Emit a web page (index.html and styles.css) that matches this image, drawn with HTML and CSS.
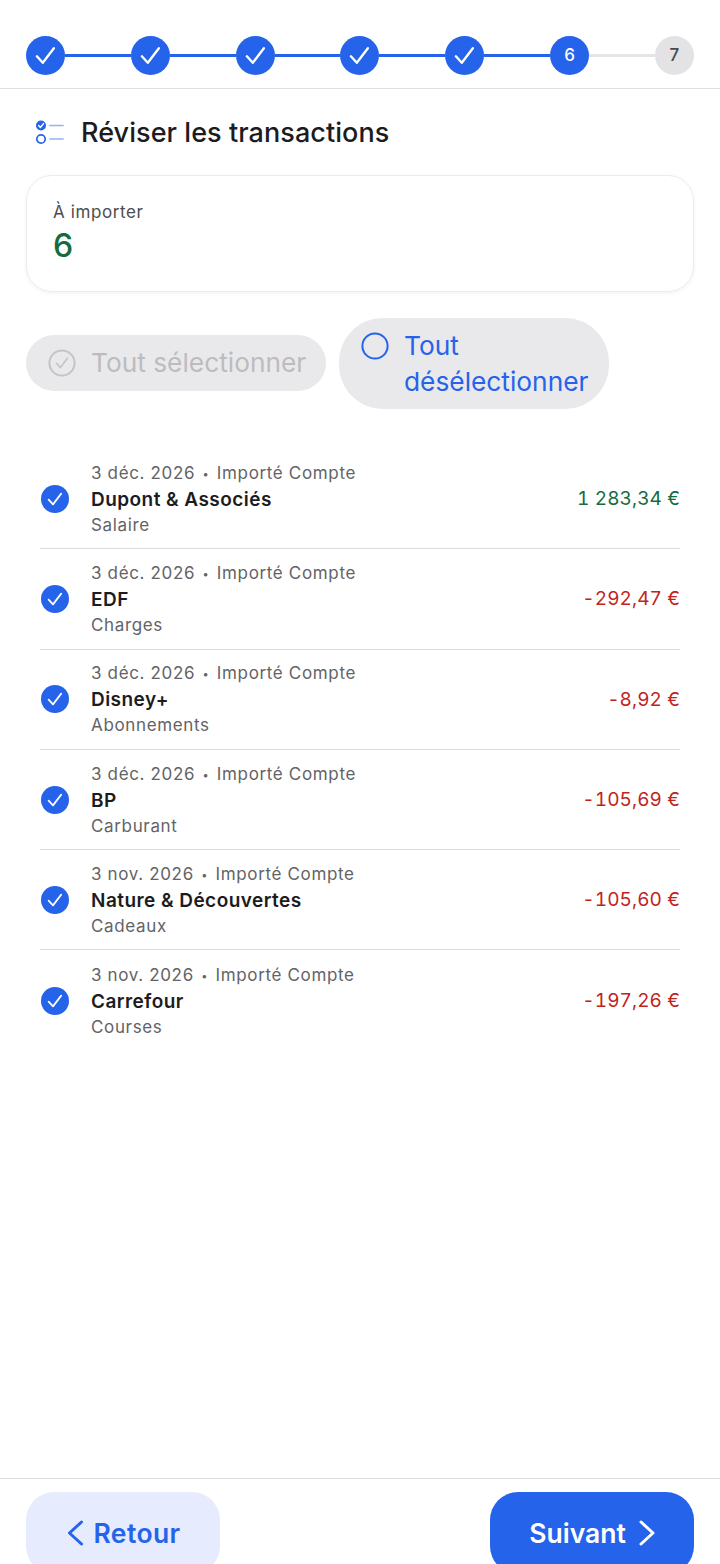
FILE: index.html
```html
<!DOCTYPE html>
<html lang="fr">
<head>
  <meta charset="UTF-8">
  <meta name="viewport" content="width=device-width, initial-scale=1.0">
  <title>Réviser les transactions</title>
  <link rel="stylesheet" href="styles.css">
</head>
<body>
  <svg class="icon-defs" width="0" height="0">
    <defs>
      <symbol id="check" viewBox="0 0 20 20">
        <path d="M3.6 10.6 L8 15.4 L16.2 4.6" fill="none" stroke="#fff" stroke-width="1.75" stroke-linecap="round" stroke-linejoin="round"/>
      </symbol>
    </defs>
  </svg>

  <div class="page">
    <div class="stepper">
      <div class="step step-done"><svg class="step-check"><use href="#check"/></svg></div>
      <div class="step-line step-line-done"></div>
      <div class="step step-done"><svg class="step-check"><use href="#check"/></svg></div>
      <div class="step-line step-line-done"></div>
      <div class="step step-done"><svg class="step-check"><use href="#check"/></svg></div>
      <div class="step-line step-line-done"></div>
      <div class="step step-done"><svg class="step-check"><use href="#check"/></svg></div>
      <div class="step-line step-line-done"></div>
      <div class="step step-done"><svg class="step-check"><use href="#check"/></svg></div>
      <div class="step-line step-line-done"></div>
      <div class="step step-done">6</div>
      <div class="step-line"></div>
      <div class="step step-todo">7</div>
    </div>

    <div class="title-row">
      <svg class="title-icon" width="30" height="26" viewBox="0 0 30 26">
        <circle cx="6" cy="6.5" r="5" fill="#2563eb"/>
        <path d="M3.6 6.6 L5.4 8.5 L8.5 4.6" fill="none" stroke="#fff" stroke-width="1.4" stroke-linecap="round" stroke-linejoin="round"/>
        <circle cx="6" cy="20" r="4.2" fill="none" stroke="#2563eb" stroke-width="1.7"/>
        <path d="M15 6.5 H28 M15 20 H28" stroke="#93b2f6" stroke-width="1.7" stroke-linecap="round"/>
      </svg>
      <h1 class="title">Réviser les transactions</h1>
    </div>

    <div class="summary-card">
      <p class="summary-label">À importer</p>
      <p class="summary-value">6</p>
    </div>

    <div class="select-row">
      <button class="select-btn select-btn-off">
        <svg class="select-icon" width="28" height="28" viewBox="0 0 28 28">
          <circle cx="14" cy="14" r="12.6" fill="none" stroke="#c4c4c6" stroke-width="2"/>
          <path d="M8.6 14.4 L12.4 18.6 L19.4 9.2" fill="none" stroke="#c4c4c6" stroke-width="1.6" stroke-linecap="round" stroke-linejoin="round"/>
        </svg>
        <span>Tout sélectionner</span>
      </button>
      <button class="select-btn select-btn-on">
        <svg class="select-icon" width="28" height="28" viewBox="0 0 28 28">
          <circle cx="14" cy="14" r="12.6" fill="none" stroke="#2563eb" stroke-width="2"/>
        </svg>
        <span>Tout désélectionner</span>
      </button>
    </div>

    <ul class="tx-list">
      <li class="tx-row">
        <span class="tx-check"><svg class="tx-check-icon"><use href="#check"/></svg></span>
        <div class="tx-info">
          <p class="tx-meta">3 déc. 2026 <span class="tx-dot">•</span> Importé Compte</p>
          <p class="tx-name">Dupont &amp; Associés</p>
          <p class="tx-cat">Salaire</p>
        </div>
        <span class="tx-amount tx-in">1&nbsp;283,34 €</span>
      </li>
      <li class="tx-row">
        <span class="tx-check"><svg class="tx-check-icon"><use href="#check"/></svg></span>
        <div class="tx-info">
          <p class="tx-meta">3 déc. 2026 <span class="tx-dot">•</span> Importé Compte</p>
          <p class="tx-name">EDF</p>
          <p class="tx-cat">Charges</p>
        </div>
        <span class="tx-amount tx-out">-292,47 €</span>
      </li>
      <li class="tx-row">
        <span class="tx-check"><svg class="tx-check-icon"><use href="#check"/></svg></span>
        <div class="tx-info">
          <p class="tx-meta">3 déc. 2026 <span class="tx-dot">•</span> Importé Compte</p>
          <p class="tx-name">Disney+</p>
          <p class="tx-cat">Abonnements</p>
        </div>
        <span class="tx-amount tx-out">-8,92 €</span>
      </li>
      <li class="tx-row">
        <span class="tx-check"><svg class="tx-check-icon"><use href="#check"/></svg></span>
        <div class="tx-info">
          <p class="tx-meta">3 déc. 2026 <span class="tx-dot">•</span> Importé Compte</p>
          <p class="tx-name">BP</p>
          <p class="tx-cat">Carburant</p>
        </div>
        <span class="tx-amount tx-out">-105,69 €</span>
      </li>
      <li class="tx-row">
        <span class="tx-check"><svg class="tx-check-icon"><use href="#check"/></svg></span>
        <div class="tx-info">
          <p class="tx-meta">3 nov. 2026 <span class="tx-dot">•</span> Importé Compte</p>
          <p class="tx-name">Nature &amp; Découvertes</p>
          <p class="tx-cat">Cadeaux</p>
        </div>
        <span class="tx-amount tx-out">-105,60 €</span>
      </li>
      <li class="tx-row">
        <span class="tx-check"><svg class="tx-check-icon"><use href="#check"/></svg></span>
        <div class="tx-info">
          <p class="tx-meta">3 nov. 2026 <span class="tx-dot">•</span> Importé Compte</p>
          <p class="tx-name">Carrefour</p>
          <p class="tx-cat">Courses</p>
        </div>
        <span class="tx-amount tx-out">-197,26 €</span>
      </li>
    </ul>

    <div class="footer">
      <button class="nav-btn nav-btn-back">
        <svg width="17" height="26" viewBox="0 0 17 26"><path d="M15.5 2 L3.5 13 L15.5 24" fill="none" stroke="#2563eb" stroke-width="3" stroke-linecap="round" stroke-linejoin="round"/></svg>
        <span>Retour</span>
      </button>
      <button class="nav-btn nav-btn-next">
        <span>Suivant</span>
        <svg width="16" height="26" viewBox="0 0 16 26"><path d="M2 2 L14 13 L2 24" fill="none" stroke="#fff" stroke-width="3" stroke-linecap="round" stroke-linejoin="round"/></svg>
      </button>
    </div>
  </div>
</body>
</html>
```

FILE: styles.css
```css
* {
  margin: 0;
  padding: 0;
  box-sizing: border-box;
  font-family: Inter, "Liberation Sans", sans-serif;
}

html, body {
  height: 100%;
  overflow: hidden;
}

body {
  background-color: #fff;
  color: #1c1c1e;
}

.icon-defs {
  display: block;
  height: 0;
}

.page {
  height: 1564px;
  display: flex;
  flex-direction: column;
  overflow: hidden;
}

.stepper {
  display: flex;
  align-items: center;
  height: 89px;
  padding: 36px 26px 14px;
  border-bottom: 1px solid #dfdfe1;
}

.step {
  width: 39px;
  height: 39px;
  border-radius: 50%;
  flex: none;
  display: flex;
  align-items: center;
  justify-content: center;
  font-size: 17px;
  font-weight: 500;
}

.step-done {
  background-color: #2563eb;
  color: #fff;
}

.step-todo {
  background-color: #e3e3e5;
  color: #4a4a4d;
}

.step-check {
  width: 27px;
  height: 27px;
}

.step-line {
  flex: 1;
  height: 3px;
  background-color: #e5e5e7;
}

.step-line-done {
  background-color: #2563eb;
}

.title-row {
  display: flex;
  align-items: center;
  gap: 16px;
  padding: 0 35px;
  height: 86px;
}

.title-icon {
  flex: none;
}

.title {
  font-size: 27px;
  font-weight: 500;
  letter-spacing: 0.06px;
}

.summary-card {
  margin: 0 26px;
  height: 117px;
  padding: 26px 26px 0;
  border: 1px solid #ececee;
  border-radius: 26px;
  box-shadow: 0 1px 4px rgba(0, 0, 0, 0.06);
}

.summary-label {
  font-size: 17px;
  line-height: 20px;
  letter-spacing: 0.6px;
  color: #4d4d50;
}

.summary-value {
  font-size: 32px;
  line-height: 48px;
  font-weight: 500;
  color: #166b3e;
}

.select-row {
  display: flex;
  align-items: center;
  gap: 13px;
  margin-top: 26px;
  padding: 0 26px;
}

.select-btn {
  display: flex;
  gap: 15px;
  border: none;
  background-color: #e9e9eb;
  text-align: left;
  font-size: 26.3px;
  line-height: 36px;
  padding-left: 22px;
}

.select-btn span {
  font: inherit;
}

.select-btn-off {
  flex: none;
  width: 300px;
  height: 56px;
  margin-bottom: 1px;
  align-items: center;
  border-radius: 28px;
  color: #bcbcbe;
  white-space: nowrap;
}

.select-btn-on {
  flex: none;
  width: 270px;
  height: 91px;
  align-items: flex-start;
  border-radius: 44px;
  color: #2563eb;
  padding-top: 10px;
  padding-right: 18px;
}

.select-icon {
  flex: none;
}

.select-btn-on .select-icon {
  margin-top: 4px;
}

.tx-list {
  list-style: none;
  margin: 40px 40px 0;
}

.tx-row {
  display: flex;
  align-items: center;
  height: 100.3px;
  border-bottom: 1px solid #dcdcde;
}

.tx-row:last-child {
  border-bottom: none;
}

.tx-check {
  width: 28px;
  height: 28px;
  margin-left: 1px;
  border-radius: 50%;
  background-color: #2563eb;
  flex: none;
  display: flex;
  align-items: center;
  justify-content: center;
}

.tx-check-icon {
  width: 20px;
  height: 20px;
}

.tx-info {
  flex: 1;
  margin-left: 22px;
}

.tx-meta, .tx-cat {
  font-size: 17px;
  line-height: 26px;
  color: #636366;
  letter-spacing: 0.65px;
}

.tx-dot {
  font-size: 11px;
  margin: 0 2px;
  vertical-align: 1px;
}

.tx-name {
  font-size: 19px;
  line-height: 25px;
  font-weight: 600;
  letter-spacing: 0.45px;
  color: #1c1c1e;
}

.tx-amount {
  font-size: 19px;
  letter-spacing: 0.1px;
  font-variant-numeric: tabular-nums;
}

.tx-in {
  color: #166b3e;
}

.tx-out {
  color: #c0241c;
}

.footer {
  margin-top: auto;
  height: 86px;
  flex: none;
  display: flex;
  justify-content: space-between;
  padding: 13px 26px 0;
  border-top: 1px solid #dfdfe1;
}

.nav-btn {
  display: flex;
  align-items: center;
  justify-content: center;
  height: 82px;
  flex: none;
  border: none;
  border-radius: 28px;
  font-size: 26.5px;
  font-weight: 600;
}

.nav-btn span {
  font: inherit;
}

.nav-btn-back {
  width: 194px;
  gap: 11px;
  letter-spacing: 0.4px;
  background-color: #e6ebfd;
  color: #2563eb;
}

.nav-btn-next {
  width: 204px;
  gap: 13px;
  background-color: #2563eb;
  color: #fff;
}
```
